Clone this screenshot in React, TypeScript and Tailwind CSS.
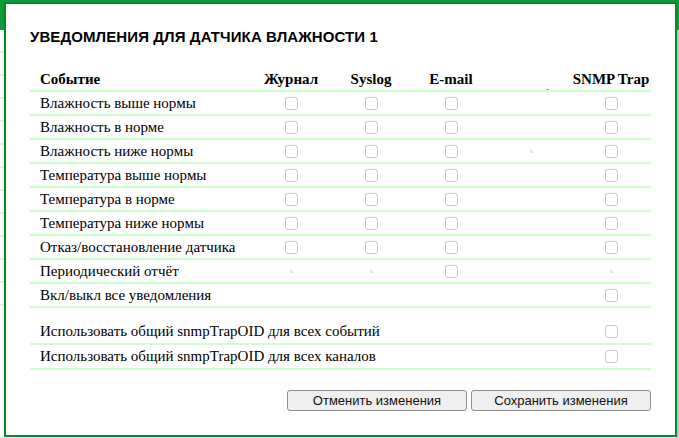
import React from "react";

type Cell = "cb" | "dot" | "none";

const rows: { label: string; cells: Cell[] }[] = [
  { label: "Влажность выше нормы", cells: ["cb", "cb", "cb", "none", "cb"] },
  { label: "Влажность в норме", cells: ["cb", "cb", "cb", "none", "cb"] },
  { label: "Влажность ниже нормы", cells: ["cb", "cb", "cb", "dot", "cb"] },
  { label: "Температура выше нормы", cells: ["cb", "cb", "cb", "none", "cb"] },
  { label: "Температура в норме", cells: ["cb", "cb", "cb", "none", "cb"] },
  { label: "Температура ниже нормы", cells: ["cb", "cb", "cb", "none", "cb"] },
  { label: "Отказ/восстановление датчика", cells: ["cb", "cb", "cb", "none", "cb"] },
  { label: "Периодический отчёт", cells: ["dot", "dot", "cb", "none", "dot"] },
  { label: "Вкл/выкл все уведомления", cells: ["none", "none", "none", "none", "cb"] },
];

const extra = [
  "Использовать общий snmpTrapOID для всех событий",
  "Использовать общий snmpTrapOID для всех каналов",
];

function Box() {
  return <span className="block w-[13px] h-[13px] rounded-[3px] border border-[#c9c9c9] bg-white" />;
}

function CellView({ c }: { c: Cell }) {
  return (
    <div className="flex items-center justify-center">
      {c === "cb" && <Box />}
      {c === "dot" && <span className="block w-[3px] h-[3px] rounded-full border border-[#d0d0d0]" />}
    </div>
  );
}

const grid = "grid grid-cols-[221px_80px_80px_80px_80px_80px]";

export default function App() {
  return (
    <div className="relative w-[679px] h-[438px] overflow-hidden bg-white" style={{ fontFamily: '"Liberation Serif", serif' }}>
      {/* background page */}
      <div className="h-[30px] bg-[#0a9b3c]" />
      <div className="flex flex-col">
        {Array.from({ length: 12 }).map((_, i) => (
          <div key={i} className="h-[23px] border-b-2 border-[#ccffcc]" />
        ))}
      </div>
      <div className="absolute right-0 top-[30px] bottom-0 w-[3px] bg-[#c2c2c2]" />

      {/* dialog */}
      <div className="absolute left-[4px] top-[2px] w-[673px] h-[435px] bg-white border-2 border-[#078a1f] pl-[24px] pr-[24px] pt-[24px]">
        <div
          className="text-[15px] font-bold text-black leading-[18px] tracking-[0.1px]"
          style={{ fontFamily: '"Liberation Sans", Arial, sans-serif' }}
        >
          УВЕДОМЛЕНИЯ ДЛЯ ДАТЧИКА ВЛАЖНОСТИ 1
        </div>

        <div className="mt-[22px] w-[621px] text-[15px] text-black">
          <div className={`${grid} h-[24px] items-center border-b-2 border-[#ccffcc] font-bold`}>
            <div className="pl-[10px]">Событие</div>
            <div className="text-center">Журнал</div>
            <div className="text-center">Syslog</div>
            <div className="text-center">E-mail</div>
            <div className="relative h-full">
              <span className="absolute left-[55px] bottom-[1px] w-[3px] h-[1px] bg-[#a0a0a0]" />
            </div>
            <div className="text-center">SNMP Trap</div>
          </div>

          {rows.map((r) => (
            <div key={r.label} className={`${grid} h-[24px] items-center border-b-2 border-[#ccffcc]`}>
              <div className="pl-[10px]">{r.label}</div>
              {r.cells.map((c, i) => (
                <CellView key={i} c={c} />
              ))}
            </div>
          ))}

          <div className="h-[12px]" />

          {extra.map((t) => (
            <div key={t} className={`${grid} h-[25px] items-center border-b-2 border-[#ccffcc]`}>
              <div className="pl-[10px] col-span-5 whitespace-nowrap">{t}</div>
              <CellView c="cb" />
            </div>
          ))}
        </div>

        <div className="mt-[20px] w-[621px] flex justify-end gap-[4px]" style={{ fontFamily: '"Liberation Sans", Arial, sans-serif' }}>
          <button className="w-[180px] h-[21px] rounded-[3px] border border-[#8f8f8f] bg-[#efefef] text-[13px] text-[#111] leading-none">
            Отменить изменения
          </button>
          <button className="w-[180px] h-[21px] rounded-[3px] border border-[#8f8f8f] bg-[#efefef] text-[13px] text-[#111] leading-none">
            Сохранить изменения
          </button>
        </div>
      </div>
    </div>
  );
}
